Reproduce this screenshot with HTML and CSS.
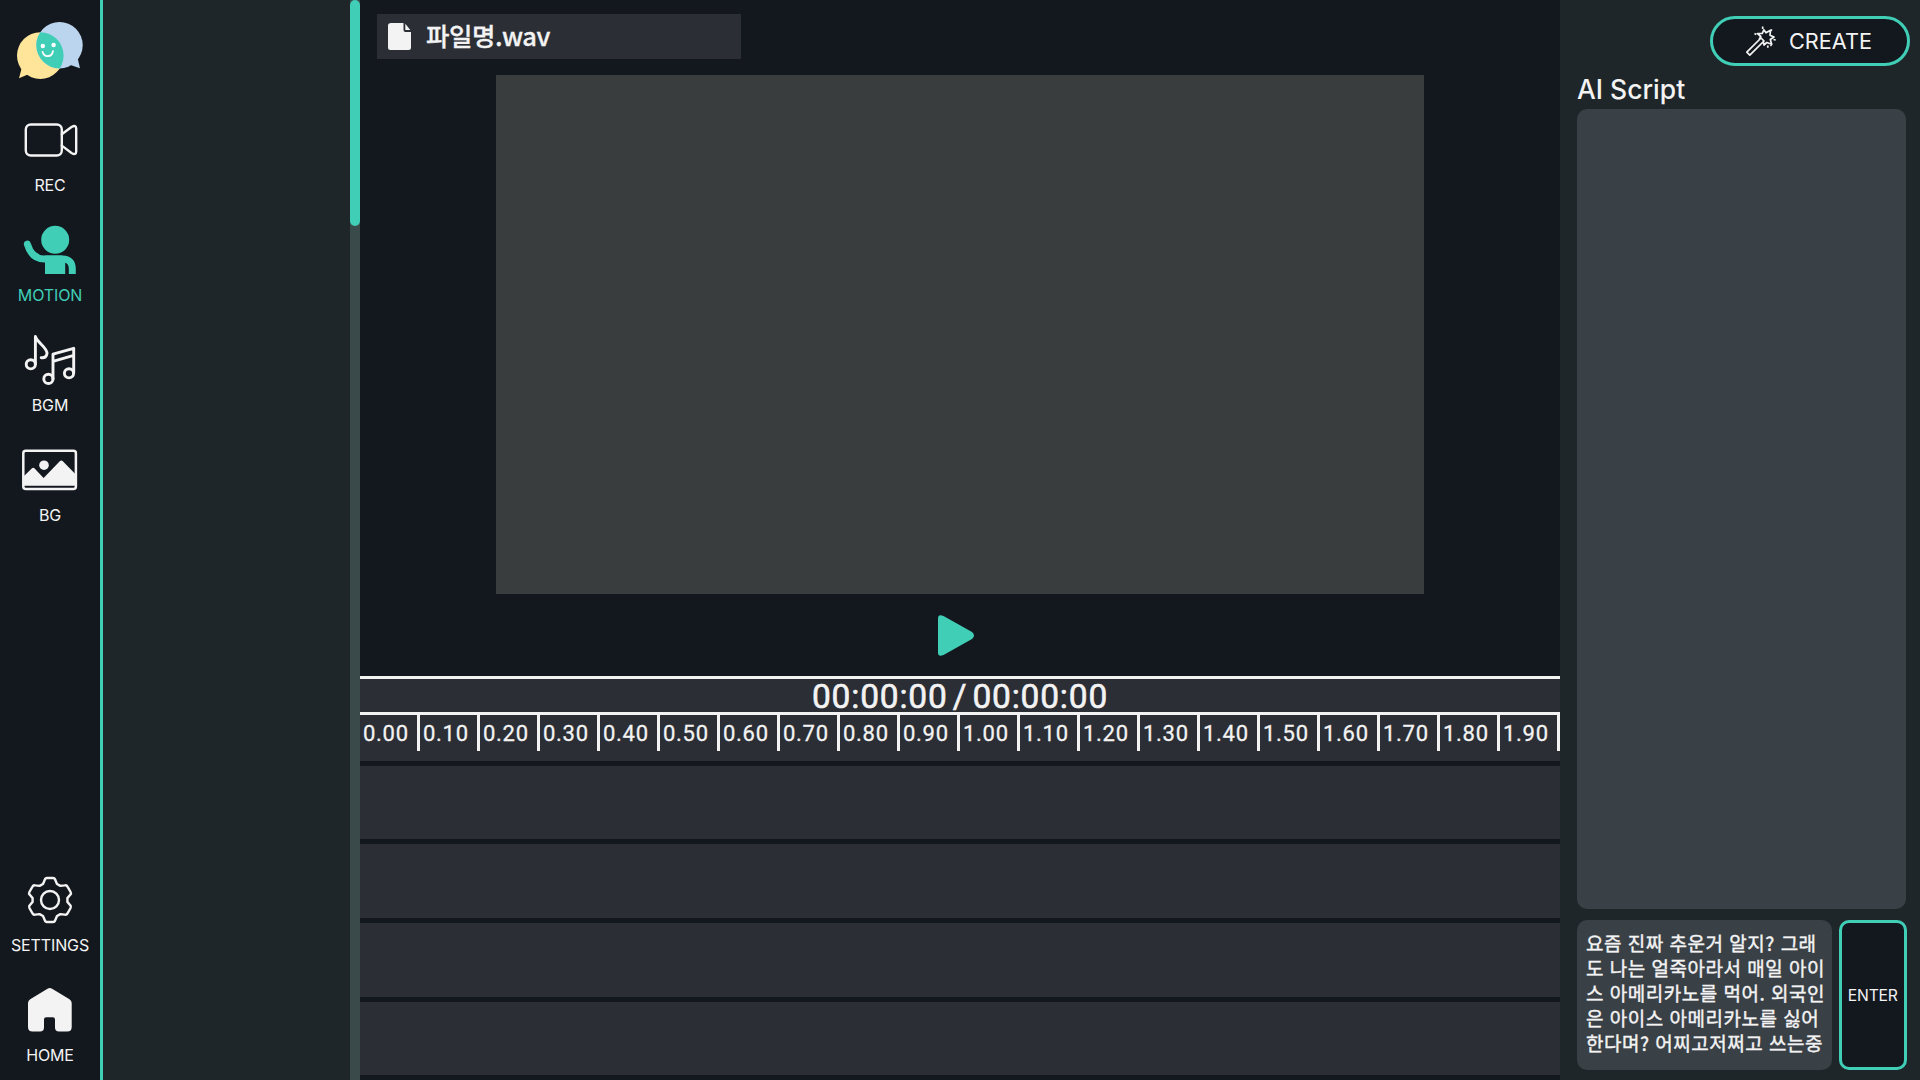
FILE: index.html
```html
<!DOCTYPE html>
<html lang="ko">
<head>
<meta charset="utf-8">
<title>Editor</title>
<link rel="stylesheet" href="styles.css">
</head>
<body>
<div class="app">
  <nav class="sidebar">
    <svg class="logo" viewBox="0 0 100 110">
      <defs><clipPath id="blue-bubble"><circle cx="59.5" cy="45.2" r="23.2"/></clipPath></defs>
      <path fill="#ffe59a" d="M22 67 19 78.2 29 74z"/>
      <circle fill="#ffe59a" cx="40.3" cy="55.6" r="23.3"/>
      <path fill="#bbd5ef" d="M77.6 58 80 68.2 69 64.5z"/>
      <circle fill="#bbd5ef" cx="59.5" cy="45.2" r="23.2"/>
      <circle fill="#40ceb7" cx="40.3" cy="55.6" r="23.3" clip-path="url(#blue-bubble)"/>
      <circle fill="#fff" cx="42.8" cy="46" r="2.2"/><circle fill="#fff" cx="53.6" cy="45" r="2.2"/>
      <path fill="none" stroke="#fff" stroke-width="1.7" stroke-linecap="round" d="M42.5 51.8C44 57.8 52 57.6 53 51"/>
    </svg>
    <a class="item">
      <svg class="icon line" viewBox="18 110 64 60"><rect x="25.8" y="124.5" width="36" height="31" rx="5"/><path d="M61.8 134.200 71.500 127Q76.200 124.300 76.200 128.500V151.500Q76.200 155.700 71.500 153L61.800 145.600"/></svg>
      <span>REC</span>
    </a>
    <a class="item active">
      <svg class="icon" viewBox="18 220 64 60"><circle cx="55.2" cy="239.8" r="14"/><path fill="none" stroke="currentColor" stroke-width="7" stroke-linecap="round" d="M27.4 244.2C29.8 252.500 35 259 44.500 259H61"/><path d="M45 255.500H62.500Q75.800 256 75.800 269V274H68.800V269Q68.800 263.500 65.200 262.700V274H45z"/></svg>
      <span>MOTION</span>
    </a>
    <a class="item">
      <svg class="icon line notes" viewBox="18 330 64 60"><circle cx="30.800" cy="364.300" r="4.600"/><circle cx="48.400" cy="378.900" r="4.600"/><circle cx="69" cy="373.300" r="4.600"/><path d="M35.400 364V336.500C37.500 343 47.500 347.500 47 353.500C46.500 357 44 358 41.200 357.700M53 379V354.200L73.700 348.300V373M53 361.300 73.700 355.300"/></svg>
      <span>BGM</span>
    </a>
    <a class="item">
      <svg class="icon" viewBox="18 440 64 60"><rect x="23.300" y="450.800" width="52.600" height="38.300" rx="2.500" fill="none" stroke="currentColor" stroke-width="2.500"/><circle cx="44" cy="465.200" r="4.800"/><path d="M23.500 476.500 32 468.300Q33.200 467.300 34.400 468.300L43.600 478 60 461Q61.300 459.900 62.600 461L75.800 474.500V485.700H23.500z"/></svg>
      <span>BG</span>
    </a>
    <a class="item settings">
      <svg class="icon line" viewBox="-32 -30 64 60"><circle r="9" cx="0" cy="0"/><path d="M-7-16-5.300-20Q-4.800-22-3-22H3Q4.800-22 5.300-20L7-16 10.400-14.100 14.700-14.600Q16.700-15 17.500-13.400L20.600-8Q21.500-6.500 20.200-5.200L17.400-1.900V1.900L20.200 5.200Q21.500 6.500 20.600 8L17.500 13.400Q16.700 15 14.700 14.600L10.400 14.100 7 16 5.300 20Q4.800 22 3 22H-3Q-4.800 22-5.300 20L-7 16-10.400 14.100-14.700 14.600Q-16.700 15-17.500 13.400L-20.600 8Q-21.500 6.500-20.200 5.200L-17.400 1.900V-1.900L-20.200-5.200Q-21.500-6.500-20.600-8L-17.500-13.400Q-16.700-15-14.700-14.600L-10.400-14.100z"/></svg>
      <span>SETTINGS</span>
    </a>
    <a class="item home">
      <svg class="icon" viewBox="18 980 64 60"><path d="M47.500 988.800Q49.800 987.300 52.100 988.800L69.500 999.300Q71.700 1000.700 71.700 1003V1027Q71.700 1031.500 67.200 1031.500H59Q55 1031.500 55 1027.500V1019.500Q55 1017.300 52.800 1017.300H46.200Q44 1017.300 44 1019.500V1027.500Q44 1031.500 40 1031.500H32.500Q28 1031.500 28 1027V1003Q28 1000.700 30.200 999.300z"/></svg>
      <span>HOME</span>
    </a>
  </nav>
  <aside class="browser"><div class="scrollbar"><div class="thumb"></div></div></aside>
  <main class="workspace">
    <section class="stage">
      <div class="file">
        <svg class="file-icon" viewBox="0 0 24 28"><path d="M3 0H15.500V7Q15.500 9 17.500 9H23V24.500Q23 27 20.500 27H2.500Q0 27 0 24.500V2.500Q0 0 3 0zM17.300.8 22.300 6.900H17.300z"/></svg>
        <span class="file-name">파일명.wav</span>
      </div>
      <div class="canvas"></div>
      <svg class="play" viewBox="0 0 36 41"><path d="M0 3.500Q0-1.500 5.500 1L34 17Q38 20.500 34 24L5.500 40Q0 42.500 0 37.500z"/></svg>
    </section>
    <section class="timeline">
      <div class="clock">00:00:00 / 00:00:00</div>
      <div class="ruler">
        <span>0.00</span><span>0.10</span><span>0.20</span><span>0.30</span><span>0.40</span><span>0.50</span><span>0.60</span><span>0.70</span><span>0.80</span><span>0.90</span><span>1.00</span><span>1.10</span><span>1.20</span><span>1.30</span><span>1.40</span><span>1.50</span><span>1.60</span><span>1.70</span><span>1.80</span><span>1.90</span>
      </div>
      <div class="tracks"><div></div><div></div><div></div><div></div></div>
    </section>
  </main>
  <aside class="script-panel">
    <button class="create">
      <svg class="wand" viewBox="0 0 30 30"><path d="M.8 26.200 15 12 18 15 3.800 29.200zM13.200 13.500 14.800 10.500 11.500 7.500 16.300 7.500 17.800 3.800 20 6.800 24.500 4.200 24 9.300 28 11 24.300 13.500 25.700 18.300 20.800 16.500 18 19 17.200 15.500M16.700.5V3M26 3.500 24.800 4.700M27.500 13.500 29.700 14M21.800 19.500V21.800M8.500 7.500 10.300 8.500M24.500 19 25.500 20"/></svg>
      <span>CREATE</span>
    </button>
    <h1>AI Script</h1>
    <div class="output"></div>
    <div class="prompt">
      <div class="input">
        <p>요즘 진짜 추운거 알지? 그래</p>
        <p>도 나는 얼죽아라서 매일 아이</p>
        <p>스 아메리카노를 먹어. 외국인</p>
        <p>은 아이스 아메리카노를 싫어</p>
        <p>한다며? 어찌고저쩌고 쓰는중</p>
      </div>
      <button class="enter">ENTER</button>
    </div>
  </aside>
</div>
</body>
</html>
```
FILE: styles.css
```css
* { box-sizing: border-box; }
body { margin: 0; background: #13181f; color: #f3f3f3; font-family: Inter, "Noto Sans CJK KR", sans-serif; }
svg { display: block; }
p, h1 { margin: 0; font-weight: 400; }
button { padding: 0; color: inherit; background: #13181f; border: 3px solid #40ceb7; font-family: inherit; }
.app { display: grid; grid-template-columns: 103px 257px 1200px 360px; height: 1080px; overflow: hidden; }

.sidebar { display: flex; flex-direction: column; border-right: 3px solid #40ceb7; padding-bottom: 15px; }
.logo { width: 100px; height: 110px; }
.item { display: flex; flex-direction: column; align-items: center; gap: 5px; height: 110px; font-size: 16px; line-height: 20px; letter-spacing: -.12px; white-space: nowrap; }
.icon { width: 64px; height: 60px; fill: currentColor; }
.line { fill: none; stroke: currentColor; stroke-width: 2.4; stroke-linejoin: round; stroke-linecap: round; }
.notes { stroke-width: 2.9; }
.active { color: #40ceb7; }
.settings { margin-top: auto; }
.home { height: 85px; }

.browser { display: flex; justify-content: flex-end; background: #1f2629; }
.scrollbar { width: 10px; background: #3a4a4a; }
.thumb { height: 226px; border-radius: 5px; background: #40ceb7; }

.workspace { display: flex; flex-direction: column; }
.stage { display: flex; flex-direction: column; align-items: center; height: 676px; padding-top: 14px; }
.file { display: flex; align-items: center; align-self: flex-start; width: 364px; height: 45px; margin-left: 17px; padding-left: 11px; background: #2b2e35; }
.file-icon { width: 24px; height: 28px; fill: #f3f3f3; }
.file-name { margin: 0 0 3px 14px; font: 500 25.500px/42px "Noto Sans CJK KR", sans-serif; letter-spacing: -.5px; -webkit-text-stroke: .3px #f3f3f3; }
.canvas { width: 928px; height: 519px; margin-top: 15.500px; background: #3a3d3e; }
.play { width: 36px; height: 41px; margin: 21px 8px 0 0; fill: #40ceb7; }

.timeline { flex: 1; border-top: 3px solid #f3f3f3; }
.clock { height: 36px; border-bottom: 3px solid #f3f3f3; background: #2b2e35; text-align: center; font: 400 33.500px/36px Roboto, sans-serif; letter-spacing: .8px; word-spacing: -4px; -webkit-text-stroke: .6px #f3f3f3; }
.ruler { display: grid; grid-template-columns: repeat(20, 60px); height: 46px; background: #2b2e35; }
.ruler span { height: 36px; padding-left: 3px; border-right: 3px solid #f3f3f3; font: 400 22px/37px Roboto, sans-serif; letter-spacing: .7px; -webkit-text-stroke: .3px #f3f3f3; }
.tracks { display: grid; grid-template-rows: 73px 74px 74px 73px; gap: 5px; height: 319px; padding: 5px 0; }
.tracks div { background: #2b2e35; }

.script-panel { display: flex; flex-direction: column; padding: 16px 10px 10px 17px; background: #1f2629; }
.create { display: flex; align-items: center; align-self: flex-end; width: 200px; height: 50px; padding-left: 33px; border-radius: 25px; font-size: 21.700px; }
.create span { margin-left: 13px; }
.wand { width: 30px; height: 30px; fill: none; stroke: #f3f3f3; stroke-width: 1.7; stroke-linejoin: round; }
h1 { height: 43px; font-size: 26.500px; font-weight: 500; line-height: 47px; }
.output { width: 329px; height: 800px; border-radius: 10px; background: #394046; }
.prompt { display: flex; gap: 7px; margin-top: 11px; height: 150px; }
.input { width: 255px; padding: 10px 9px; border-radius: 10px; background: #394046; font: 500 19px/25px "Noto Sans CJK KR", sans-serif; letter-spacing: .5px; white-space: nowrap; -webkit-text-stroke: .4px #f3f3f3; }
.enter { width: 67.500px; border-radius: 10px; font-size: 15.700px; letter-spacing: -.2px; }
```
